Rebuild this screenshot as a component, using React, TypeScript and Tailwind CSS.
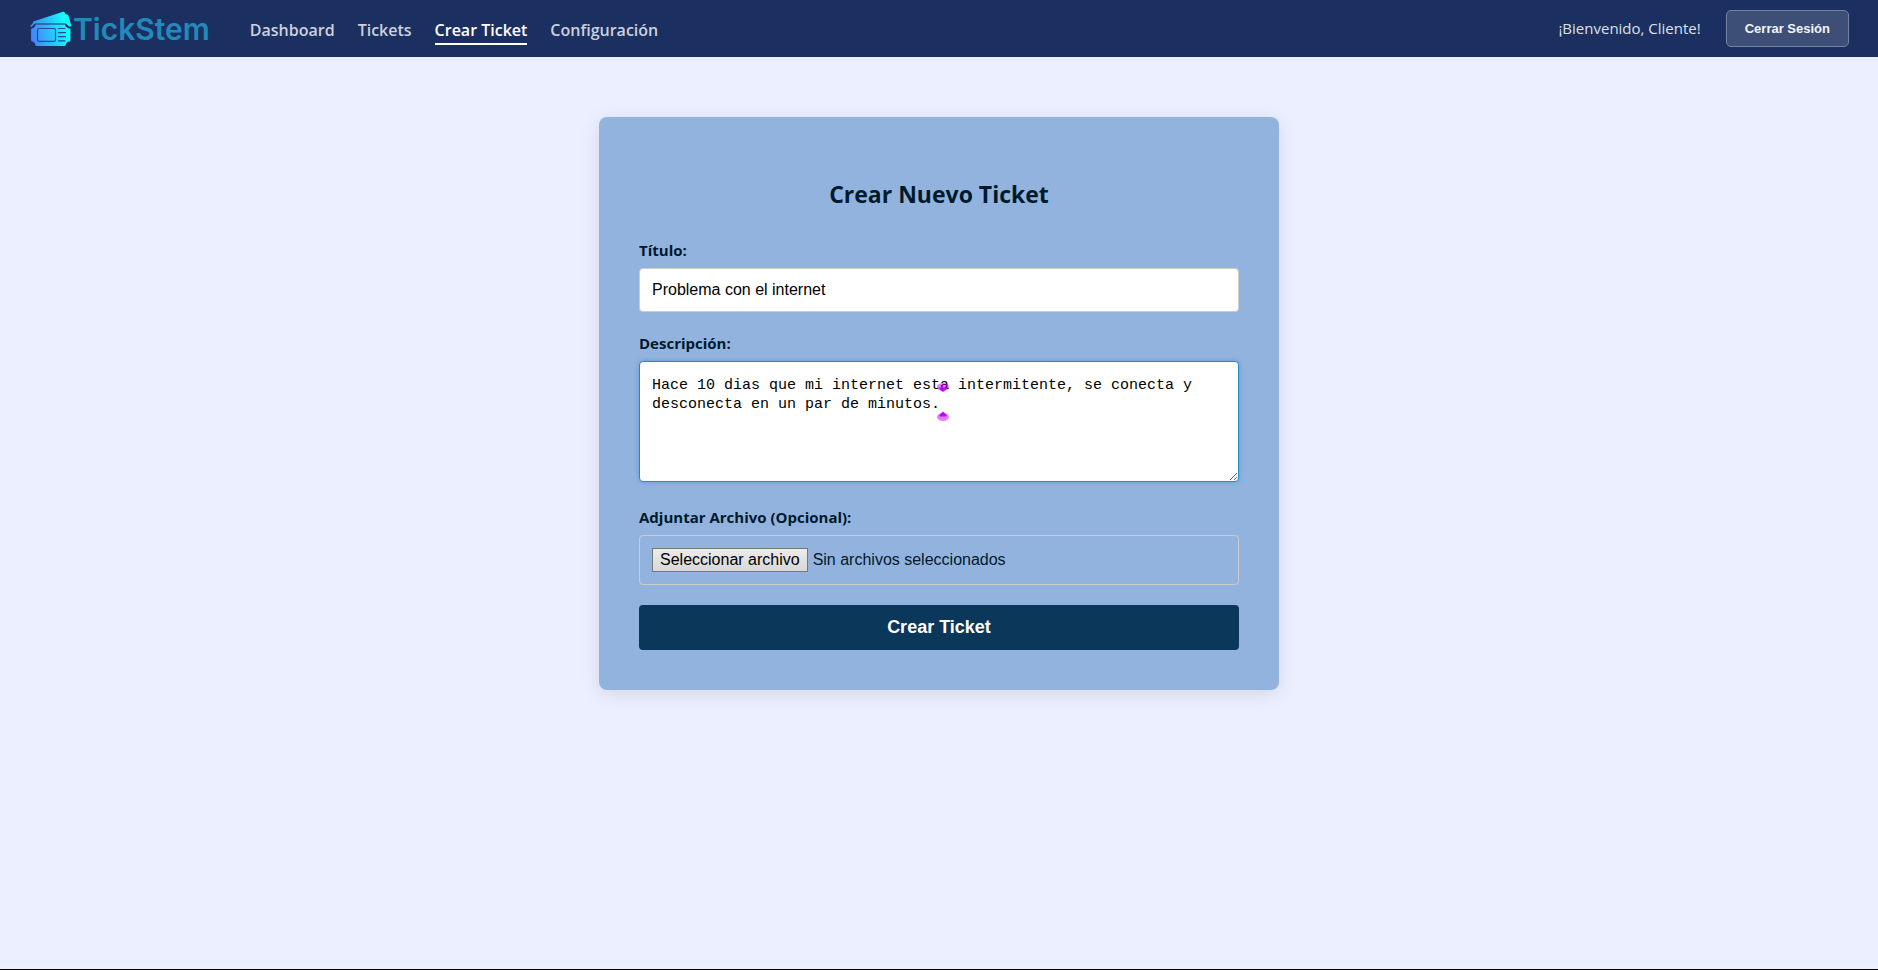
import { useState } from "react";

const navItems = [
  { label: "Dashboard", active: false },
  { label: "Tickets", active: false },
  { label: "Crear Ticket", active: true },
  { label: "Configuración", active: false },
];

function LogoMark() {
  return (
    <svg className="h-[36px] w-[42px]" viewBox="0 0 42 36" fill="none" aria-hidden="true">
      <defs>
        <linearGradient id="ticket-gradient" x1="0" y1="26" x2="36" y2="18" gradientUnits="userSpaceOnUse">
          <stop offset="0" stopColor="#4a7dfa" />
          <stop offset="0.5" stopColor="#2db8fb" />
          <stop offset="1" stopColor="#14fafb" />
        </linearGradient>
      </defs>
      <path
        d="M3.200 10.600 33 0.800c.8-.3 1.400 0 1.700.7 .2 1.200 1 2 2.300 2 .8-.1 1.200.3 1.400 1L41.500 15.500h-2.500l-3.200-3H5L1.200 16.200 0.300 14.500c2-.9 2.700-2.300 2.900-3.900Z"
        fill="url(#ticket-gradient)"
      />
      <path
        d="M5.500 13.600h29.500c.3 2.100 1.700 3.400 4 3.700.8.100 1.500.5 1.500 1.300v10.700c0 .8-.6 1.200-1.400 1.300-1.700.2-3 1.500-3.300 3.200-.1.700-.6 1.200-1.300 1.200H6.500c-.8 0-1.200-.5-1.300-1.200-.2-1.700-1.200-2.900-2.800-3.200-.8-.1-1.300-.6-1.300-1.300V18.600c0-.7.500-1.200 1.300-1.300 1.800-.3 2.900-1.600 3.100-3.700Z"
        fill="url(#ticket-gradient)"
      />
      <rect x="7.500" y="17.500" width="18" height="12.800" rx="1.500" stroke="#1b4f92" strokeWidth="1.200" />
      <path d="M28.500 17.500h6.500M28.500 21.600h7M28.500 25.700h7M28.500 29.800h6.500" stroke="#1b4f92" strokeWidth="1.200" strokeLinecap="round" />
    </svg>
  );
}

/** Markers above and below the text caret. */
function CaretMarkers() {
  return (
    <svg
      className="pointer-events-none absolute left-[298px] top-[22px] h-[38px] w-[12px]"
      viewBox="0 0 12 38"
      aria-hidden="true"
    >
      <ellipse cx="6" cy="4" rx="6" ry="4" fill="#c800ff" fillOpacity="0.5" />
      <path d="M2.500 4.500h7V6L6 9 2.500 6Z" fill="#bf00ff" />
      <ellipse cx="6" cy="34" rx="6" ry="4" fill="#c800ff" fillOpacity="0.5" />
      <path d="M2.500 33.500h7V32L6 28.500 2.500 32Z" fill="#bf00ff" />
    </svg>
  );
}

const labelClass = "mb-[7px] block text-[15px] leading-[22px] font-bold";

export default function App() {
  const [title, setTitle] = useState("Problema con el internet");
  const [description, setDescription] = useState(
    "Hace 10 dias que mi internet esta intermitente, se conecta y desconecta en un par de minutos."
  );
  const [fileName, setFileName] = useState("Sin archivos seleccionados");

  return (
    <div className="flex min-h-screen flex-col border-b border-black bg-[#ecefff] font-['Open_Sans',sans-serif] text-[#001a2c]">
      <header className="flex h-[57px] items-center justify-between bg-[#1b3060] pr-[29px] pl-[30px]">
        <div className="flex items-center gap-10">
          <a href="#" className="flex items-center gap-px font-['Inter',sans-serif] text-[30px] leading-9 font-semibold text-[#2289bb]">
            <LogoMark />
            TickStem
          </a>
          <nav className="flex items-center gap-[23px] pt-1">
            {navItems.map((item) => (
              <a
                key={item.label}
                href="#"
                className={
                  item.active
                    ? "border-b-2 border-white pt-px text-base leading-[26px] font-semibold text-white"
                    : "border-b-2 border-transparent pt-px text-base leading-[26px] font-semibold text-[#ccd1dc]"
                }
              >
                {item.label}
              </a>
            ))}
          </nav>
        </div>
        <div className="flex items-center gap-[25px]">
          <span className="text-[15px] text-[#dde0e7]">¡Bienvenido, Cliente!</span>
          <button
            type="button"
            className="h-[37px] rounded-[5px] border border-[#76839f] bg-[#3d4e77] px-[18px] font-['Liberation_Sans',sans-serif] text-[13px] font-bold text-[#f4f5f8]"
          >
            Cerrar Sesión
          </button>
        </div>
      </header>

      <main className="mx-auto w-full max-w-[680px] pt-[60px]">
        <form
          onSubmit={(event) => event.preventDefault()}
          className="rounded-lg bg-[#93b3df] p-10 shadow-[0_4px_20px_rgba(0,0,0,0.1)]"
        >
          <h2 className="mt-[21px] mb-[29px] text-center text-[23px] leading-8 font-bold">Crear Nuevo Ticket</h2>

          <div className="mb-5">
            <label htmlFor="titulo" className={labelClass}>
              Título:
            </label>
            <input
              id="titulo"
              type="text"
              value={title}
              onChange={(event) => setTitle(event.target.value)}
              className="block h-11 w-full rounded-[4px] border border-[#ccc] bg-white px-3 font-['Liberation_Sans',sans-serif] text-base text-black"
            />
          </div>

          <div className="mb-6">
            <label htmlFor="descripcion" className={labelClass}>
              Descripción:
            </label>
            <div className="relative">
              <textarea
                id="descripcion"
                value={description}
                onChange={(event) => setDescription(event.target.value)}
                className="block h-[121px] w-full resize-y rounded-[4px] border border-[#1f8cc4] bg-white px-3 py-[14px] font-['Liberation_Mono',monospace] text-[15px] leading-[19px] text-black shadow-[0_0_5px_rgba(31,140,196,0.5)] outline-none"
              />
              <CaretMarkers />
            </div>
          </div>

          <div className="mb-5">
            <label htmlFor="archivo" className={labelClass}>
              Adjuntar Archivo (Opcional):
            </label>
            <label
              htmlFor="archivo"
              className="flex h-[50px] items-center gap-[5px] rounded-[4px] border border-[#ccc] px-3 font-['Liberation_Sans',sans-serif] text-base"
            >
              <span className="border border-[#767676] bg-linear-to-b from-[#ececec] to-[#d8d8d8] px-[7px] leading-[22px] text-black">
                Seleccionar archivo
              </span>
              <span>{fileName}</span>
              <input
                id="archivo"
                type="file"
                className="sr-only"
                onChange={(event) => setFileName(event.target.files?.[0]?.name ?? "Sin archivos seleccionados")}
              />
            </label>
          </div>

          <button
            type="submit"
            className="h-[45px] w-full rounded-[4px] bg-[#0a375a] font-['Liberation_Sans',sans-serif] text-[18px] font-bold text-white"
          >
            Crear Ticket
          </button>
        </form>
      </main>
    </div>
  );
}
